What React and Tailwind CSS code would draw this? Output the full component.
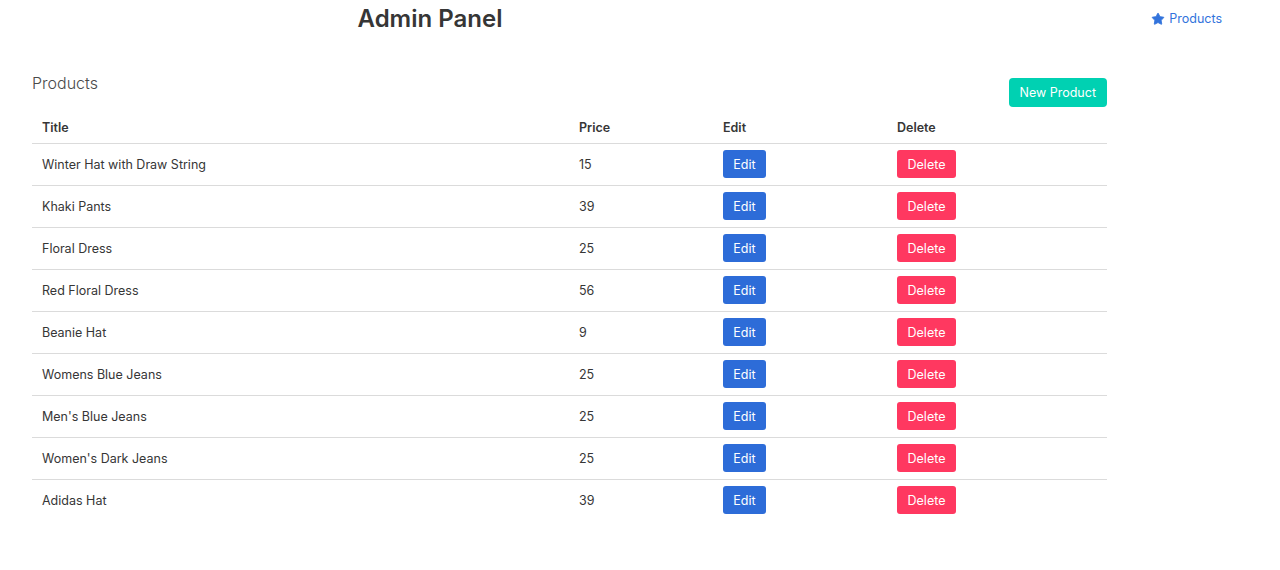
import { Star } from "lucide-react";

const products = [
    { title: "Winter Hat with Draw String", price: 15 },
    { title: "Khaki Pants", price: 39 },
    { title: "Floral Dress", price: 25 },
    { title: "Red Floral Dress", price: 56 },
    { title: "Beanie Hat", price: 9 },
    { title: "Womens Blue Jeans", price: 25 },
    { title: "Men's Blue Jeans", price: 25 },
    { title: "Women's Dark Jeans", price: 25 },
    { title: "Adidas Hat", price: 39 },
];

export default function App() {
    return (
        <div className="min-h-[570px] bg-white text-[#363636] font-['Inter',sans-serif]">
            {/* Header */}
            <header className="flex items-center h-[38px]">
                <h1 className="w-[860px] text-center text-[24px] font-semibold leading-none text-[#363636]">
                    Admin Panel
                </h1>
                <a href="#" className="ml-auto mr-[58px] flex items-center gap-[4px] text-[12.5px] text-[#3273dc]">
                    <Star size={14} fill="#3273dc" strokeWidth={1.5} />
                    Products
                </a>
            </header>

            <main className="pt-[35px] pl-[32px] w-[1107px]">
                <div className="flex justify-between items-start">
                    <h2 className="text-[16px] leading-[20px] font-light text-[#4a4a4a]">Products</h2>
                    <button className="mt-[5px] h-[29px] pt-px px-[11px] rounded-[4px] bg-[#00d1b2] text-white text-[12.5px]">
                        New Product
                    </button>
                </div>

                <table className="mt-[5px] w-full border-collapse text-[12.5px]">
                    <thead>
                        <tr className="border-b border-[#dbdbdb] h-[31px] text-left">
                            <th className="w-[537px] pl-[10px] pt-[2px] font-semibold">Title</th>
                            <th className="w-[144px] pl-[10px] pt-[2px] font-semibold">Price</th>
                            <th className="w-[174px] pl-[10px] pt-[2px] font-semibold">Edit</th>
                            <th className="pl-[10px] pt-[2px] font-semibold">Delete</th>
                        </tr>
                    </thead>
                    <tbody>
                        {products.map((p, i) => (
                            <tr
                                key={p.title}
                                className={`h-[42px] ${i < products.length - 1 ? "border-b border-[#dbdbdb]" : ""}`}
                            >
                                <td className="pl-[10px] pt-[2px]">{p.title}</td>
                                <td className="pl-[10px] pt-[2px]">{p.price}</td>
                                <td className="pl-[10px]">
                                    <button className="h-[28px] w-[43px] pt-[2px] rounded-[3px] bg-[#2d6cd8] text-white">Edit</button>
                                </td>
                                <td className="pl-[10px]">
                                    <button className="h-[28px] w-[59px] pt-[2px] rounded-[3px] bg-[#ff3860] text-white">Delete</button>
                                </td>
                            </tr>
                        ))}
                    </tbody>
                </table>
            </main>
        </div>
    );
}
